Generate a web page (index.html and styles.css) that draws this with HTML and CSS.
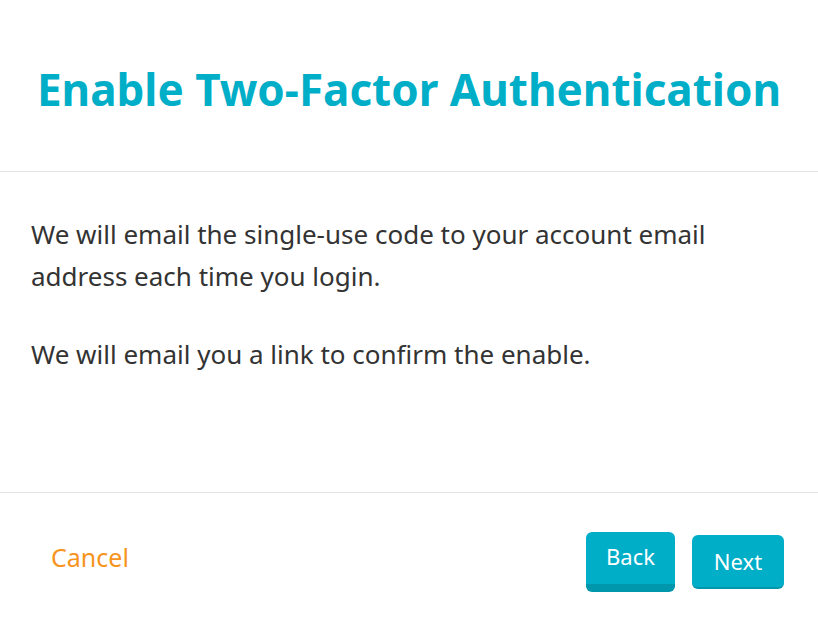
FILE: index.html
```html
<!DOCTYPE html>
<html lang="en">
<head>
    <meta charset="UTF-8">
    <meta name="viewport" content="width=device-width, initial-scale=1.0">
    <title>Enable Two-Factor Authentication</title>
    <link rel="stylesheet" href="styles.css">
</head>
<body>
    <div class="modal">
        <div class="modal-header">
            <h1>Enable Two-Factor Authentication</h1>
        </div>
        <div class="modal-body">
            <p>We will email the single-use code to your account email address each time you login.</p>
            <p>We will email you a link to confirm the enable.</p>
        </div>
        <div class="modal-footer">
            <a href="#" class="cancel">Cancel</a>
            <div class="actions">
                <button class="btn btn-pressed">Back</button>
                <button class="btn">Next</button>
            </div>
        </div>
    </div>
</body>
</html>
```

FILE: styles.css
```css
body {
    margin: 0;
    background-color: #ffffff;
    font-family: "Noto Sans", "Open Sans", sans-serif;
}
.modal {
    width: 818px;
    height: 621px;
    display: flex;
    flex-direction: column;
}
.modal-header {
    height: 165px;
    padding-top: 6px;
    border-bottom: 1px solid #e3e3e3;
    display: flex;
    justify-content: center;
    align-items: center;
}
.modal-header h1 {
    margin: 0;
    color: #00aec8;
    font-size: 44px;
    font-weight: bold;
}
.modal-body {
    height: 320px;
    padding: 0 31px;
    border-bottom: 1px solid #e3e3e3;
    color: #333333;
    font-size: 26px;
    line-height: 42px;
}
.modal-body p {
    margin: 0;
    padding-top: 41px;
}
.modal-body p + p {
    padding-top: 36px;
}
.modal-footer {
    flex: 1;
    display: flex;
    justify-content: space-between;
    align-items: center;
    padding: 0 34px 0 51px;
}
.cancel {
    color: #f7941d;
    font-size: 25px;
    text-decoration: none;
}
.actions {
    display: flex;
    align-items: center;
    gap: 17px;
    padding-top: 9px;
}
.btn {
    border: none;
    border-radius: 6px;
    background-color: #00aec8;
    color: white;
    font-family: inherit;
    font-size: 22px;
    width: 92px;
    height: 54px;
    border-bottom: 2px solid #0097ad;
    cursor: pointer;
}
.btn-pressed {
    width: 89px;
    height: 60px;
    border-bottom: 8px solid #0097ad;
    padding-bottom: 4px;
}
```
